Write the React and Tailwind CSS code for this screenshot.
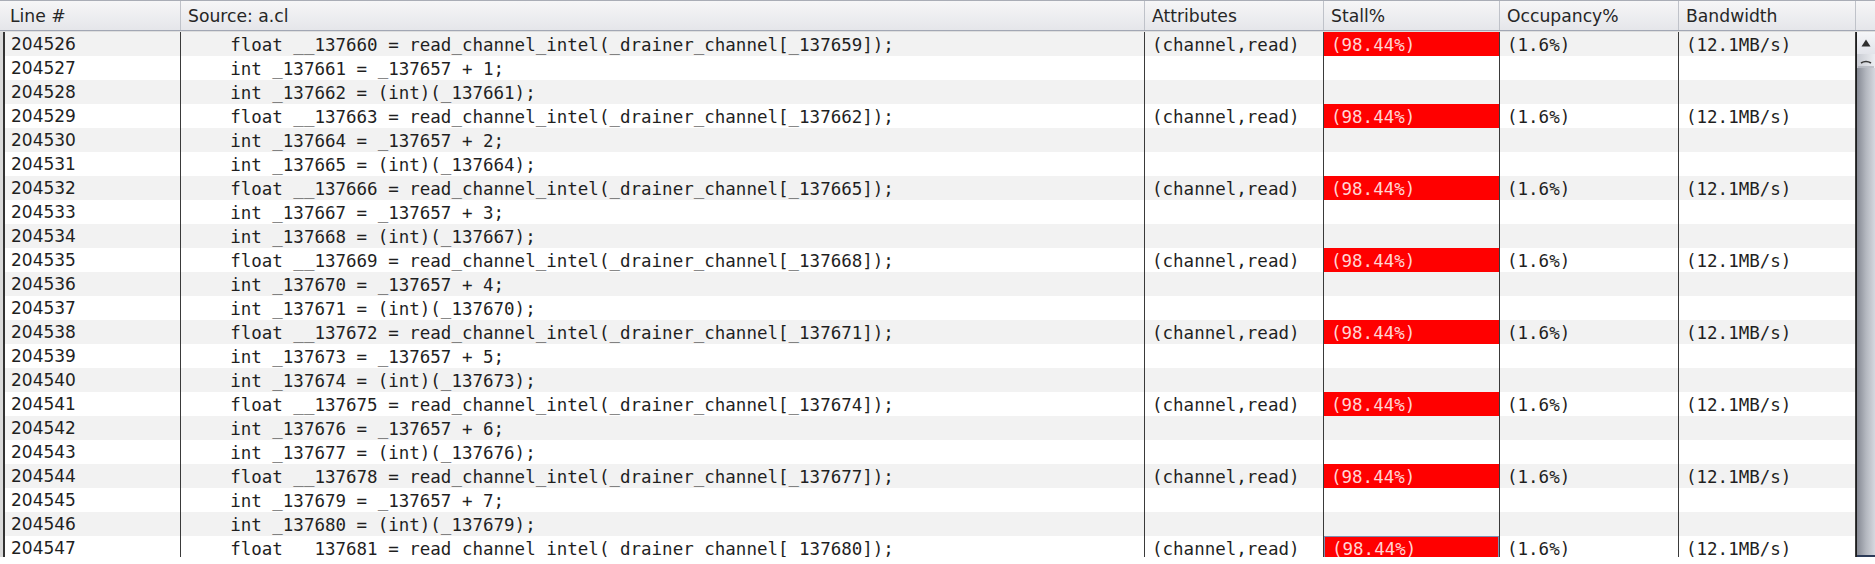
import React from "react";

const SANS = "font-['DejaVu_Sans',sans-serif]";
const MONO = "font-['DejaVu_Sans_Mono',monospace]";

const rows = Array.from({ length: 22 }, (_, i) => {
  const n = 137660 + i;
  const kind = i % 3;
  let src;
  if (kind === 0) src = `float __${n} = read_channel_intel(_drainer_channel[_${n - 1}]);`;
  else if (kind === 1) src = `int _${n} = _137657 + ${(i + 2) / 3};`;
  else src = `int _${n} = (int)(_${n - 1});`;
  return { line: 204526 + i, src, hot: kind === 0 };
});

const HeaderCell = ({ width, label, first }) => (
  <div
    className={`${width} shrink-0 h-full flex items-center pt-[2px] border-r border-[#bfc2c9] ${
      first ? "pl-[10px]" : "pl-[7px]"
    } text-[17.2px] text-[#262626] whitespace-pre`}
  >
    {label}
  </div>
);

const Row = ({ row, idx, last }) => (
  <div className={`flex h-[24px] shrink-0 ${idx % 2 === 0 ? "bg-[#f2f2f2]" : "bg-white"}`}>
    <div className={`w-[176px] shrink-0 border-r border-[#3a3a3a] pl-[6px] pt-[2px] flex items-center ${SANS} text-[17px] text-[#1f1f1f]`}>
      {row.line}
    </div>
    <div className={`w-[964px] shrink-0 border-r border-[#3a3a3a] pl-[7px] pt-[2px] flex items-center ${MONO} text-[17.5px] text-[#1f1f1f] whitespace-pre overflow-hidden`}>
      {"    " + row.src}
    </div>
    <div className={`w-[179px] shrink-0 border-r border-[#3a3a3a] pl-[7px] pt-[2px] flex items-center ${MONO} text-[17.5px] text-[#1f1f1f] whitespace-pre`}>
      {row.hot ? "(channel,read)" : ""}
    </div>
    <div className="w-[176px] shrink-0 border-r border-[#3a3a3a] flex">
      {row.hot && (
        <div
          className={`flex-1 bg-[#ff0000] pl-[7px] pt-[2px] flex items-center ${MONO} text-[17.5px] text-[#ffd4d4] whitespace-pre ${
            last ? "border-t border-l border-r border-[#7f8fb2]" : ""
          }`}
        >
          (98.44%)
        </div>
      )}
    </div>
    <div className={`w-[179px] shrink-0 border-r border-[#3a3a3a] pl-[7px] pt-[2px] flex items-center ${MONO} text-[17.5px] text-[#1f1f1f] whitespace-pre`}>
      {row.hot ? "(1.6%)" : ""}
    </div>
    <div className={`w-[177px] shrink-0 border-r border-[#3a3a3a] pl-[7px] pt-[2px] flex items-center ${MONO} text-[17.5px] text-[#1f1f1f] whitespace-pre`}>
      {row.hot ? "(12.1MB/s)" : ""}
    </div>
  </div>
);

const Scrollbar = () => (
  <div className="w-[19px] shrink-0 border-l border-[#1e1e1e] flex flex-col">
    <div className="h-[22px] shrink-0 bg-gradient-to-b from-[#f5f6f9] to-[#e2e4ea] flex items-center justify-center">
      <svg width="10" height="8" viewBox="0 0 10 8">
        <path d="M5 0.5 L9.5 7.5 L0.5 7.5 Z" fill="#2f2f2f" />
      </svg>
    </div>
    <div className="h-[14px] shrink-0 bg-gradient-to-r from-[#c9ccd3] to-[#eceef2]">
      <svg width="18" height="14" viewBox="0 0 18 14">
        <path d="M4 9 Q9 6 14 9" stroke="#3a3a3a" strokeWidth="1.6" fill="none" />
        <path d="M1 13 L17 13" stroke="#9a9ea8" strokeWidth="1" />
      </svg>
    </div>
    <div className="flex-1 bg-gradient-to-r from-[#868a94] via-[#b3b7bf] to-[#d5d8df]" />
    <div className="h-[2px] shrink-0 bg-[#2c3b58]" />
  </div>
);

export default function App() {
  return (
    <div className={`w-[1875px] h-[564px] bg-white overflow-hidden ${SANS}`}>
      <div className="flex h-[31px] border-t border-[#a9adb6] border-b border-b-[#a2a7b4] bg-gradient-to-b from-[#f6f6f7] to-[#e5e6ea]">
        <HeaderCell width="w-[181px]" label="Line #" first />
        <HeaderCell width="w-[964px]" label="Source: a.cl" />
        <HeaderCell width="w-[179px]" label="Attributes" />
        <HeaderCell width="w-[176px]" label="Stall%" />
        <HeaderCell width="w-[179px]" label="Occupancy%" />
        <HeaderCell width="w-[177px]" label="Bandwidth" />
        <div className="w-[19px] shrink-0 h-full" />
      </div>

      <div className="flex h-[526px] border-t border-[#dedede] overflow-hidden">
        <div className="w-[3px] shrink-0 bg-[#dadada]" />
        <div className="w-[2px] shrink-0 bg-[#333333]" />
        <div className="flex flex-col overflow-hidden">
          {rows.map((row, i) => (
            <Row key={row.line} row={row} idx={i} last={i === rows.length - 1} />
          ))}
        </div>
        <Scrollbar />
      </div>
    </div>
  );
}
